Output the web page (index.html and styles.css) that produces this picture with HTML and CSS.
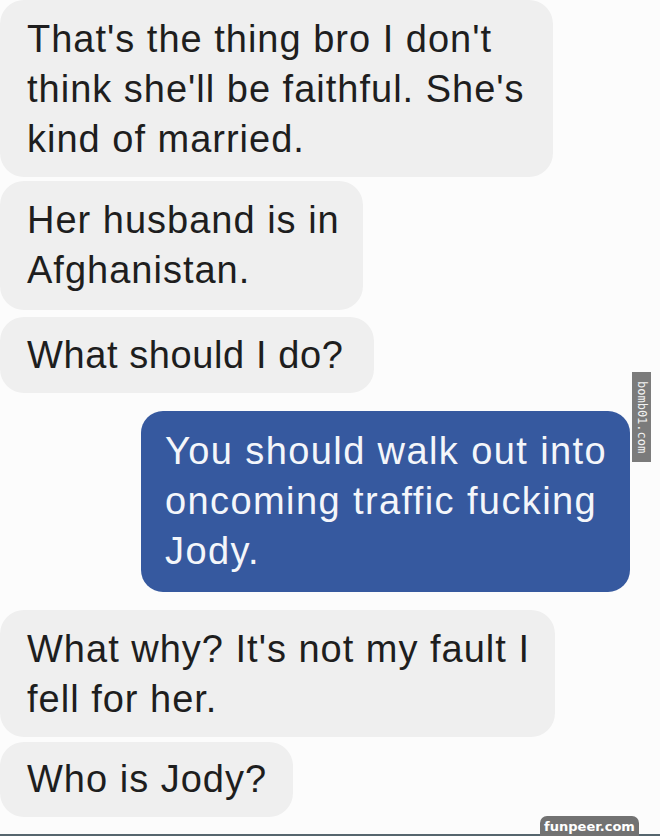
FILE: index.html
```html
<!DOCTYPE html>
<html>
<head>
<meta charset="utf-8">
<link rel="stylesheet" href="styles.css">
</head>
<body>
<div class="chat">
  <div class="bubble in w1">That's the thing bro I don't<br>think she'll be faithful. She's<br>kind of married.</div>
  <div class="bubble in w2 g4">Her husband is in<br>Afghanistan.</div>
  <div class="bubble in w3 g7">What should I do?</div>
  <div class="bubble out g18">You should walk out into<br>oncoming traffic fucking<br>Jody.</div>
  <div class="bubble in w4 g18">What why? It's not my fault I<br>fell for her.</div>
  <div class="bubble in w5 g5">Who is Jody?</div>
</div>
<div class="bottom-line"></div>
<div class="wm-side">bomb01.com</div>
<div class="wm-foot">funpeer.com</div>
</body>
</html>
```
FILE: styles.css
```css
html, body {
  margin: 0;
  padding: 0;
  background: #fcfcfc;
  width: 660px;
  height: 836px;
  overflow: hidden;
  position: relative;
}
.chat {
  display: flex;
  flex-direction: column;
  align-items: flex-start;
  font-family: "Liberation Sans", Arial, sans-serif;
  font-size: 38px;
  line-height: 50px;
  letter-spacing: 1px;
}
.bubble {
  box-sizing: border-box;
  white-space: nowrap;
  border-radius: 24px;
}
.in {
  background: #efefef;
  color: #1e1e1e;
  padding: 14px 0 14px 27px;
}
.w1 { width: 553px; height: 177px; }
.w2 { width: 363px; height: 129px; }
.w3 { width: 374px; height: 76px; padding-top: 13px; letter-spacing: 0.6px; }
.w4 { width: 555px; height: 127px; }
.w5 { width: 293px; height: 75px; padding-top: 12px; }
.g4 { margin-top: 4px; }
.g5 { margin-top: 5px; }
.g7 { margin-top: 7px; }
.g18 { margin-top: 18px; }
.out {
  align-self: flex-start;
  margin-left: 141px;
  width: 489px;
  height: 181px;
  background: #36599f;
  color: #f4f6fa;
  border-radius: 22px;
  padding: 15px 0 15px 24px;
  letter-spacing: 1.4px;
}
.bottom-line {
  position: absolute;
  left: 0;
  bottom: 0;
  width: 660px;
  height: 2px;
  background: #56666e;
}
.wm-side {
  position: absolute;
  left: 632px;
  top: 372px;
  width: 19px;
  height: 90px;
  background: #7b7b7b;
  color: #f2f2f2;
  font-family: "DejaVu Sans Mono", monospace;
  font-size: 12px;
  writing-mode: vertical-rl;
  text-align: center;
  line-height: 19px;
}
.wm-foot {
  position: absolute;
  left: 540px;
  top: 816px;
  width: 99px;
  height: 20px;
  background: #727272;
  color: #ffffff;
  border-radius: 7px 7px 0 0;
  font-family: "DejaVu Sans", sans-serif;
  font-weight: bold;
  font-size: 13px;
  line-height: 21px;
  text-align: center;
}
```
